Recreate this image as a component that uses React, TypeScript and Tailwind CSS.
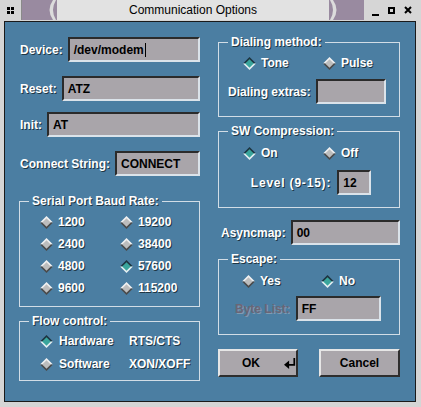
import React from "react";

const FONT = "font-['Liberation_Sans',Arial,sans-serif]";
const LABEL = "text-white font-bold text-[12px] leading-[14px] whitespace-nowrap [text-shadow:1px_1px_0_#1f3644]";

function Diamond({ on = false }: { on?: boolean }) {
  // motif style toggle diamond: raised when off, sunken teal when on
  const top = on ? "#1d3440" : "#f2f2f2";
  const bottom = on ? "#e6f0f2" : "#4a4a4a";
  const fill = on ? "#3aa59c" : "#bdbdbd";
  return (
    <svg width="13" height="13" viewBox="0 0 13 13" className="shrink-0">
      <polygon points="0,6.5 6.5,0 13,6.5" fill={top} />
      <polygon points="0,6.5 6.5,13 13,6.5" fill={bottom} />
      <polygon points="2.2,6.5 6.5,2.2 10.8,6.5 6.5,10.8" fill={fill} />
    </svg>
  );
}

function Radio({ label, on, className = "" }: { label: string; on?: boolean; className?: string }) {
  return (
    <div className={`flex items-center gap-[5px] h-[22px] ${className}`}>
      <Diamond on={on} />
      <span className={LABEL}>{label}</span>
    </div>
  );
}

function Field({ value = "", cursor = false, className = "" }: { value?: string; cursor?: boolean; className?: string }) {
  return (
    <div
      className={`h-[25px] flex items-center pl-[4px] bg-[#a9a5aa] border-2 border-t-[#2b2b2b] border-l-[#2b2b2b] border-r-[#dbe3ea] border-b-[#dbe3ea] text-black font-bold text-[12px] ${className}`}
    >
      <span>{value}</span>
      {cursor && <span className="ml-[1px] w-[1px] h-[14px] bg-black" />}
    </div>
  );
}

function Row({ label, value, cursor }: { label: string; value: string; cursor?: boolean }) {
  return (
    <div className="flex items-center gap-[5px] pl-[1px]">
      <span className={LABEL}>{label}</span>
      <Field value={value} cursor={cursor} className="flex-1" />
    </div>
  );
}

// group frame: title sits in a gap of the top line
function Group({ title, className = "", bodyClass = "", children }: { title: string; className?: string; bodyClass?: string; children: React.ReactNode }) {
  return (
    <div className={className}>
      <div className="flex items-end h-[14px]">
        <div className="w-[10px] h-[7px] border-t border-l border-[#d2dde6]" />
        <span className={`px-[3px] ${LABEL}`}>{title}</span>
        <div className="flex-1 h-[7px] border-t border-r border-[#d2dde6]" />
      </div>
      <div className={`border-l border-r border-b border-[#d2dde6] ${bodyClass}`}>{children}</div>
    </div>
  );
}

function Crescent({ flip = false }: { flip?: boolean }) {
  return (
    <svg width="10" height="20" viewBox="0 0 10 20" className={flip ? "-scale-x-100" : ""}>
      <path d="M6 0 Q-1 10 6 20 L9 20 Q3 10 9 0 Z" fill="#dcdcdc" />
    </svg>
  );
}

function TitleBar() {
  return (
    <div className="flex h-[20px] bg-[#d6d6d6]">
      <div className="w-[22px] flex items-center justify-center border-r border-[#8a8a8a]">
        <div className="grid grid-cols-2 gap-[1px]">
          <span className="w-[3px] h-[3px] bg-black" />
          <span className="w-[3px] h-[3px] bg-black" />
          <span className="w-[3px] h-[3px] bg-black" />
          <span className="w-[3px] h-[3px] bg-black" />
        </div>
      </div>
      <div className="w-[342px] flex bg-[#998aa0] px-[25px]">
        <Crescent />
        <div className="flex-1 bg-[#e2e2e2] flex items-center justify-center text-black text-[12px]">
          Communication Options
        </div>
        <Crescent flip />
      </div>
      <div className="flex-1 flex items-center pl-[8px] gap-[9px]">
        <span className="w-[7px] h-[2px] bg-black mt-[9px]" />
        <span className="w-[7px] h-[7px] border-2 border-black" />
        <svg width="8" height="8" viewBox="0 0 8 8">
          <path d="M1 1 L7 7 M7 1 L1 7" stroke="black" strokeWidth="2" />
        </svg>
      </div>
    </div>
  );
}

function ReturnArrow() {
  return (
    <svg width="14" height="13" viewBox="0 0 14 13">
      <polyline points="12,0 12,8 5,8" fill="none" stroke="black" strokeWidth="2" />
      <polygon points="0,8 6,3 6,13" fill="black" />
    </svg>
  );
}

export default function App() {
  return (
    <div className={`w-[421px] h-[407px] bg-[#d5d5d5] flex flex-col ${FONT}`}>
      <TitleBar />
      <div className="mt-[1px] ml-[4px] mr-[5px] mb-[5px] flex-1 border border-[#1a1a1a] bg-[#4b7ea2] flex pl-[14px] gap-[18px]">
        {/* left column */}
        <div className="w-[181px] flex flex-col">
          <div className="mt-[15px]">
            <Row label="Device:" value="/dev/modem" cursor />
          </div>
          <div className="mt-[14px]">
            <Row label="Reset:" value="ATZ" />
          </div>
          <div className="mt-[11px]">
            <Row label="Init:" value="AT" />
          </div>
          <div className="mt-[14px]">
            <Row label="Connect String:" value="CONNECT" />
          </div>

          <Group title="Serial Port Baud Rate:" className="mt-[18px]" bodyClass="pt-[3px] pb-[7px] pl-[20px]">
            <div className="grid grid-cols-[80px_80px]">
              <Radio label="1200" />
              <Radio label="19200" />
              <Radio label="2400" />
              <Radio label="38400" />
              <Radio label="4800" />
              <Radio label="57600" on />
              <Radio label="9600" />
              <Radio label="115200" />
            </div>
          </Group>

          <Group title="Flow control:" className="mt-[7px]" bodyClass="pt-[2px] pb-[5px] pl-[20px]">
            <div className="flex items-center gap-[6px] h-[22px]">
              <Diamond on />
              <span className={`${LABEL} w-[64px]`}>Hardware</span>
              <span className={LABEL}>RTS/CTS</span>
            </div>
            <div className="flex items-center gap-[6px] h-[22px] mt-[1px]">
              <Diamond />
              <span className={`${LABEL} w-[64px]`}>Software</span>
              <span className={LABEL}>XON/XOFF</span>
            </div>
          </Group>
        </div>

        {/* right column */}
        <div className="w-[182px] flex flex-col">
          <Group title="Dialing method:" className="mt-[13px]" bodyClass="pt-[3px] pb-[12px]">
            <div className="flex pl-[24px]">
              <Radio label="Tone" on className="w-[80px]" />
              <Radio label="Pulse" />
            </div>
            <div className="flex items-center gap-[5px] pl-[9px] mt-[5px]">
              <span className={LABEL}>Dialing extras:</span>
              <Field className="w-[70px]" />
            </div>
          </Group>

          <Group title="SW Compression:" className="mt-[7px]" bodyClass="pt-[4px] pb-[12px]">
            <div className="flex pl-[24px]">
              <Radio label="On" on className="w-[80px]" />
              <Radio label="Off" />
            </div>
            <div className="flex items-center justify-center gap-[6px] mt-[6px] pl-[4px]">
              <span className={`${LABEL} tracking-[0.8px]`}>Level (9-15):</span>
              <Field value="12" className="w-[34px]" />
            </div>
          </Group>

          <div className="flex items-center gap-[5px] pl-[3px] mt-[12px]">
            <span className={LABEL}>Asyncmap:</span>
            <Field value="00" className="flex-1" />
          </div>

          <Group title="Escape:" className="mt-[7px]" bodyClass="pt-[4px] pb-[13px]">
            <div className="flex pl-[23px]">
              <Radio label="Yes" className="w-[79px]" />
              <Radio label="No" on />
            </div>
            <div className="flex items-center gap-[6px] pl-[16px] mt-[4px]">
              <span className="text-[#6b6676] font-bold text-[12px] leading-[14px] whitespace-nowrap [text-shadow:1px_1px_0_#7f9bb2]">
                Byte List:
              </span>
              <Field value="FF" className="w-[85px]" />
            </div>
          </Group>

          <div className="flex justify-between mt-[14px]">
            <button className="w-[80px] h-[28px] bg-[#aaa6ab] border-2 border-t-[#e6e6e6] border-l-[#e6e6e6] border-r-[#2e2e2e] border-b-[#2e2e2e] flex items-center pl-[22px] gap-[24px] text-black font-bold text-[12px]">
              <span>OK</span>
              <ReturnArrow />
            </button>
            <button className="w-[81px] h-[28px] bg-[#aaa6ab] border-2 border-t-[#e6e6e6] border-l-[#e6e6e6] border-r-[#2e2e2e] border-b-[#2e2e2e] flex items-center justify-center text-black font-bold text-[12px]">
              Cancel
            </button>
          </div>
        </div>
      </div>
    </div>
  );
}
